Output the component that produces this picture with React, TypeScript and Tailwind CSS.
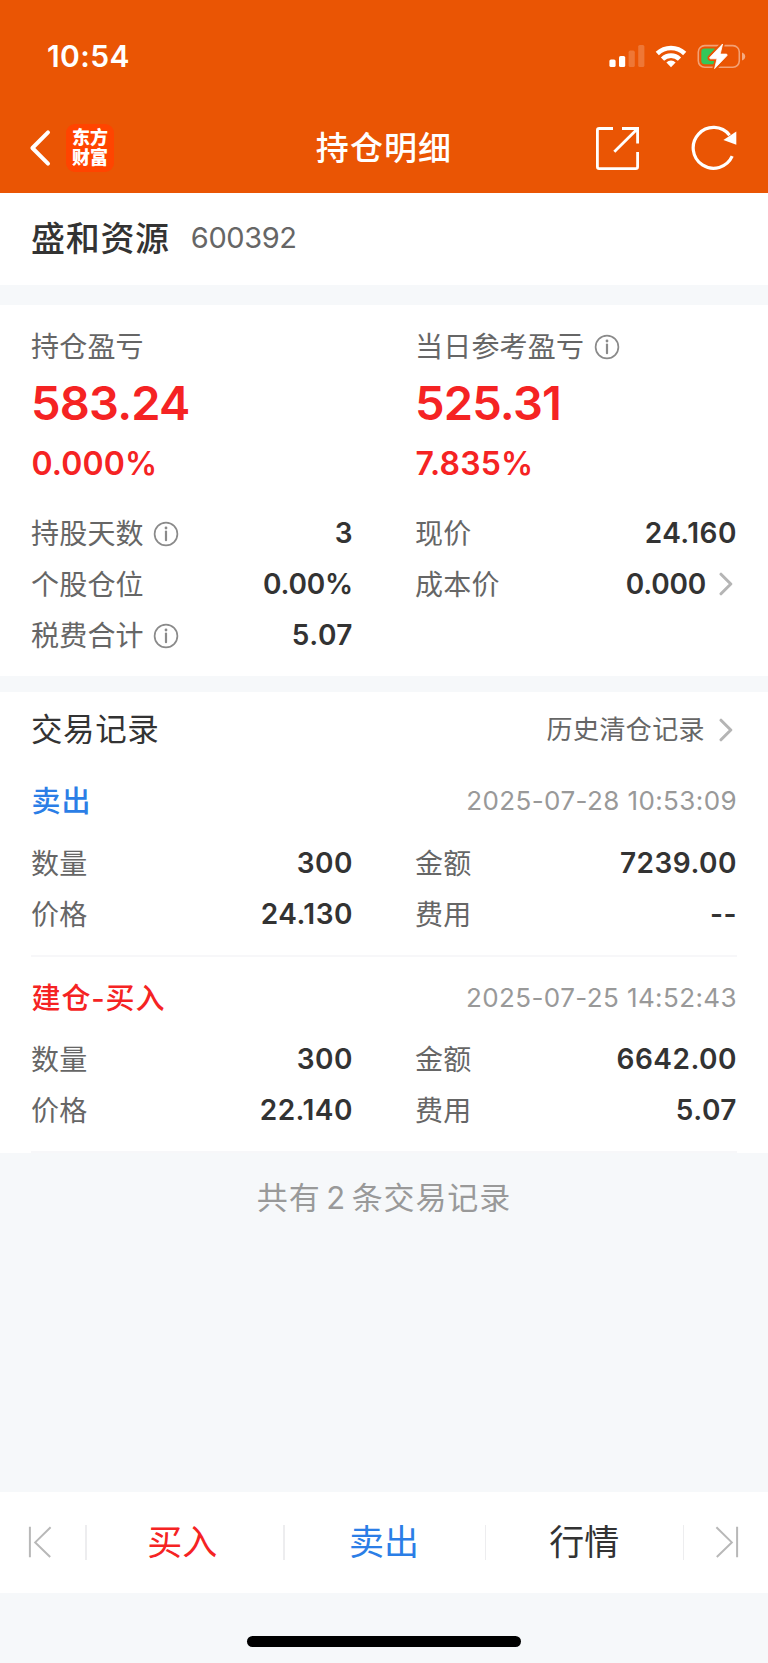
import { ReactNode } from "react"
import clsx from "clsx"

type TField = {
    label: string
    value: string
    info?: boolean
    link?: boolean
}

type TTrade = {
    title: string
    side: "buy" | "sell"
    time: string
    fields: TField[]
}

const positionFields: TField[] = [
    { label: "持股天数", value: "3", info: true },
    { label: "现价", value: "24.160" },
    { label: "个股仓位", value: "0.00%" },
    { label: "成本价", value: "0.000", link: true },
    { label: "税费合计", value: "5.07", info: true },
]

const trades: TTrade[] = [
    {
        title: "卖出",
        side: "sell",
        time: "2025-07-28 10:53:09",
        fields: [
            { label: "数量", value: "300" },
            { label: "金额", value: "7239.00" },
            { label: "价格", value: "24.130" },
            { label: "费用", value: "--" },
        ],
    },
    {
        title: "建仓-买入",
        side: "buy",
        time: "2025-07-25 14:52:43",
        fields: [
            { label: "数量", value: "300" },
            { label: "金额", value: "6642.00" },
            { label: "价格", value: "22.140" },
            { label: "费用", value: "5.07" },
        ],
    },
]

const InfoIcon = () => (
    <svg width="26" height="26" viewBox="0 0 26 26" fill="none" stroke="#8a8a8a" className="ml-[9.5px] mt-[2px] shrink-0">
        <circle cx="13" cy="13" r="11.4" strokeWidth="1.7" />
        <path d="M13 10.5V19.2" strokeWidth="2.2" strokeLinecap="round" />
        <circle cx="13" cy="7" r="1.4" fill="#8a8a8a" stroke="none" />
    </svg>
)

const ChevronIcon = () => (
    <svg width="14" height="24" viewBox="0 0 14 24" fill="none" stroke="#b5b5b5" strokeWidth="3" className="ml-[14px] mr-[3px] shrink-0">
        <path d="M2 2.2L11.8 12L2 21.8" strokeLinecap="round" strokeLinejoin="round" />
    </svg>
)

const StatusBar = () => (
    <div className="flex h-[112px] items-center justify-between pl-[47px] pr-[22px]">
        <p className="text-[30px] font-semibold leading-none tracking-[0.4px]">10:54</p>
        <svg width="138" height="28" viewBox="608 42 138 28" fill="#fff">
            <rect x="609.4" y="59.5" width="6.2" height="7.6" rx="1.6" />
            <rect x="619" y="56" width="6.2" height="11.1" rx="1.6" />
            <rect x="628.6" y="50.6" width="6.2" height="16.5" rx="1.6" opacity=".2" />
            <rect x="638.2" y="45" width="6.2" height="22.1" rx="1.6" opacity=".2" />
            <g fill="none" stroke="#fff" strokeWidth="4.6">
                <path d="M657.3 53.5A19.8 19.8 0 0 1 684.7 53.5" />
                <path d="M662.5 59.1A12.2 12.2 0 0 1 679.5 59.1" />
            </g>
            <path d="M671 67.2L666.4 62.4A6.6 6.6 0 0 1 675.6 62.4Z" />
            <rect x="698.3" y="45.6" width="41" height="21.6" rx="6.4" fill="none" stroke="#fff" strokeOpacity=".45" strokeWidth="1.6" />
            <path d="M742 52.4Q745.2 53.5 745.2 56.4T742 60.4Z" opacity=".5" />
            <rect x="701.3" y="48.6" width="16" height="15.6" rx="3.4" fill="#34c759" />
            <path d="M722.6 44L709.8 57.4Q709.4 58.6 710.6 58.8H717L714.6 68.6L727 55.6Q727.6 54.3 726.2 54.1H720.2Z" stroke="#ea5504" strokeWidth="4.4" />
            <path d="M722.6 44L709.8 57.4Q709.4 58.6 710.6 58.8H717L714.6 68.6L727 55.6Q727.6 54.3 726.2 54.1H720.2Z" stroke="#fff" strokeWidth=".8" strokeLinejoin="round" />
        </svg>
    </div>
)

const NavBar = () => (
    <div className="grid h-[72px] grid-cols-[1fr_auto_1fr] items-center pl-[29px] pr-[31px]">
        <div className="flex items-center">
            <svg width="22" height="38" viewBox="0 0 22 38" fill="none" stroke="#fff" strokeWidth="4">
                <path d="M19 3.3L3.4 19L19 34.6" strokeLinecap="round" strokeLinejoin="round" />
            </svg>
            <div className="ml-[15px] flex h-12 w-12 flex-col items-center justify-center rounded-[9px] bg-[#ff4400] pb-px">
                <p className="text-[18px] font-black leading-[20px]">东方</p>
                <p className="text-[18px] font-black leading-[20px]">财富</p>
            </div>
        </div>
        <h1 className="pl-[2px] pt-px text-[33px] font-medium leading-none tracking-[1.1px]">持仓明细</h1>
        <div className="flex items-center justify-end gap-[50px]">
            <svg width="46" height="46" viewBox="595 125 46 46" fill="none" stroke="#fff" strokeWidth="2.8">
                <path d="M613 128.5H599.2Q597.4 128.5 597.4 130.3V166.8Q597.4 168.6 599.2 168.6H635.8Q637.6 168.6 637.6 166.8V152" />
                <path d="M622 128.5H637.6V143.6M614.3 151.8L637 129.2" />
            </svg>
            <svg width="46" height="46" viewBox="691 125 46 46" fill="none">
                <path d="M732.2 156.2A20.4 20.4 0 1 1 729.6 135.2" stroke="#fff" strokeWidth="3.2" />
                <path d="M736.3 131.6V144.8L723.4 140Z" fill="#fff" />
            </svg>
        </div>
    </div>
)

const FieldLabel = ({ children }: { children: ReactNode }) => (
    <p className="-ml-px pt-[2px] text-[28px] leading-none tracking-[0.2px] text-[#666]">{children}</p>
)

const FieldRow = ({ field }: { field: TField }) => (
    <div className="flex h-[51.2px] items-center">
        <FieldLabel>{field.label}</FieldLabel>
        {field.info && <InfoIcon />}
        <p
            className={clsx(
                "-mr-px ml-auto text-[28px] font-semibold leading-none text-[#333]",
                field.value.startsWith("0.") ? "tracking-[-0.2px]" : "tracking-[0.5px]"
            )}
        >
            {field.value}
        </p>
        {field.link && <ChevronIcon />}
    </div>
)

const FieldGrid = ({ fields }: { fields: TField[] }) => (
    <div className="grid grid-cols-2 gap-x-16">
        {fields.map(field => (
            <FieldRow key={field.label} field={field} />
        ))}
    </div>
)

const Profit = ({ label, amount, percent, info }: { label: string, amount: string, percent: string, info?: boolean }) => (
    <div>
        <div className="flex h-[42px] items-center">
            <FieldLabel>{label}</FieldLabel>
            {info && <InfoIcon />}
        </div>
        <p className="-ml-px text-[47px] font-semibold leading-[72px] tracking-[-0.8px] text-[#f52323]">{amount}</p>
        <p className="-ml-[0.5px] text-[32px] font-semibold leading-[49px] tracking-[0.15px] text-[#f52323]">{percent}</p>
    </div>
)

const TradeRecord = ({ trade }: { trade: TTrade }) => (
    <div className="h-[196.3px] border-b-2 border-[#f7f7f9]">
        <div className="flex h-[82px] items-center justify-between">
            <p
                className={clsx(
                    "ml-[0.5px] pt-px text-[29px] font-medium leading-none tracking-[0.9px]",
                    trade.side === "sell" ? "text-[#2b7ee6]" : "text-[#f52323]"
                )}
            >
                {trade.title}
            </p>
            <p className="text-[26px] leading-none tracking-[0.4px] text-[#999]">{trade.time}</p>
        </div>
        <div className="-mt-[5.4px] px-px">
            <FieldGrid fields={trade.fields} />
        </div>
    </div>
)

const Separator = () => <div className="h-[35px] w-[1.5px] shrink-0 self-center bg-[#ededef]" />

const App = () => {
    return (
        <div className="flex h-[1663px] w-[768px] flex-col overflow-hidden bg-[#f6f8fa] font-['Inter','Noto_Sans_CJK_SC',sans-serif]">
            <header className="h-[192.6px] shrink-0 bg-[#ea5504] text-white">
                <StatusBar />
                <NavBar />
            </header>

            <section className="flex h-[92.4px] shrink-0 items-start bg-white px-8">
                <h2 className="-ml-px text-[34px] font-medium leading-[91px] tracking-[0.7px] text-[#333]">盛和资源</h2>
                <p className="ml-[21px] text-[29px] leading-[90px] tracking-[-0.4px] text-[#666]">600392</p>
            </section>

            <section className="mt-5 h-[371px] shrink-0 bg-white px-8 pt-5">
                <div className="mb-[19.5px] grid grid-cols-2 gap-x-16">
                    <Profit label="持仓盈亏" amount="583.24" percent="0.000%" />
                    <Profit label="当日参考盈亏" amount="525.31" percent="7.835%" info />
                </div>
                <FieldGrid fields={positionFields} />
            </section>

            <section className="mt-[15.8px] shrink-0 bg-white">
                <div className="flex h-[68.6px] items-center px-8 pt-[8px]">
                    <h2 className="-ml-px text-[31.5px] leading-none tracking-[0.6px] text-[#333]">交易记录</h2>
                    <p className="ml-auto text-[26px] leading-none tracking-[0.4px] text-[#666]">历史清仓记录</p>
                    <ChevronIcon />
                </div>
                <div className="px-[31px]">
                    {trades.map(trade => (
                        <TradeRecord key={trade.time} trade={trade} />
                    ))}
                </div>
            </section>

            <p className="mt-[21px] text-center text-[31px] leading-[48px] tracking-[0.9px] text-[#999] [word-spacing:-4px]">
                共有 2 条交易记录
            </p>

            <nav className="mt-auto flex h-[101px] shrink-0 items-center bg-white text-[35px] leading-none">
                <div className="flex w-[85px] items-center pb-px pl-[28px]">
                    <svg width="24" height="32" viewBox="0 0 24 32" fill="none" stroke="#b8b8b8" strokeWidth="2">
                        <path d="M1.9 .8V31.2M22.6 1.2L7.2 16.4L22.2 31" />
                    </svg>
                </div>
                <Separator />
                <p className="w-[196.5px] pr-[5px] text-center text-[#f52323]">买入</p>
                <Separator />
                <p className="w-[200px] pr-px text-center text-[#2b7ee6]">卖出</p>
                <Separator />
                <p className="w-[196.5px] text-center text-[#333]">行情</p>
                <Separator />
                <div className="flex flex-1 items-center justify-end pb-px pr-[29px]">
                    <svg width="24" height="32" viewBox="0 0 24 32" fill="none" stroke="#b8b8b8" strokeWidth="2">
                        <path d="M22.1 .8V31.2M1.4 1.2L16.8 16.4L1.8 31" />
                    </svg>
                </div>
            </nav>

            <div className="flex h-[70px] shrink-0 items-end justify-center pb-[16.5px]">
                <div className="h-[10.5px] w-[274px] rounded-full bg-black" />
            </div>
        </div>
    )
}

export default App
